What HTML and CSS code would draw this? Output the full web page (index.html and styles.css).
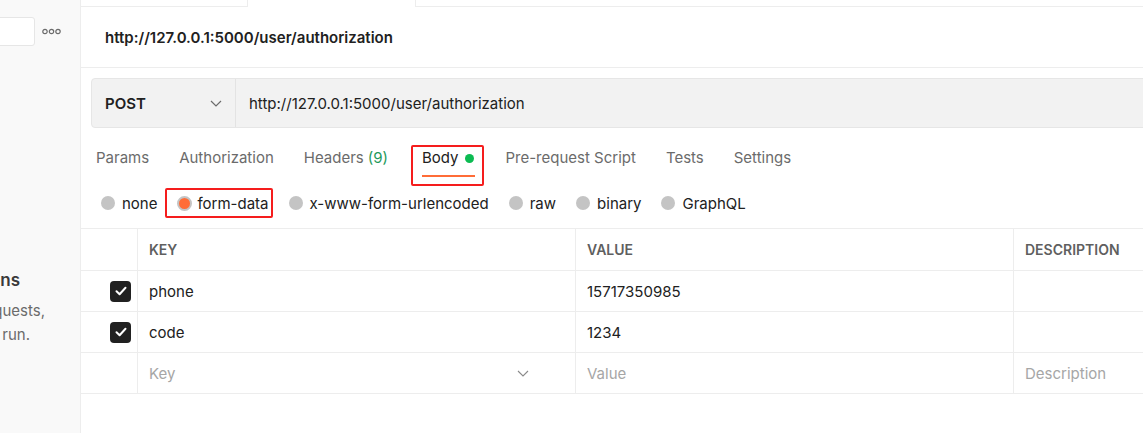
FILE: index.html
```html
<!DOCTYPE html>
<html>
<head>
<meta charset="utf-8">
<link rel="stylesheet" href="styles.css">
</head>
<body>
<div class="app">
  <aside class="sidebar">
    <div class="side-search">
      <div class="search-box"></div>
      <svg class="more" width="19" height="7" viewBox="0 0 19 7"><circle cx="3" cy="3.5" r="2.2" fill="none" stroke="#6b6b6b" stroke-width="1.2"/><circle cx="9.5" cy="3.5" r="2.2" fill="none" stroke="#6b6b6b" stroke-width="1.2"/><circle cx="16" cy="3.5" r="2.2" fill="none" stroke="#6b6b6b" stroke-width="1.2"/></svg>
    </div>
    <div class="empty">
      <div class="line l1"><span>You don't have any collections</span></div>
      <div class="line l2"><span>Collections let you group related requests,</span></div>
      <div class="line l3"><span>making them easier to access and run.</span></div>
    </div>
  </aside>
  <main class="main">
    <div class="tabstrip">
      <div class="ts-tab"></div>
      <div class="ts-active"></div>
      <div class="ts-rest"></div>
    </div>
    <div class="title">http://127.0.0.1:5000/user/authorization</div>
    <div class="reqbar">
      <div class="method">
        <span>POST</span>
        <svg class="chev" width="12" height="7" viewBox="0 0 12 7"><path d="M1 1 L6 6 L11 1" fill="none" stroke="#6b6b6b" stroke-width="1.2"/></svg>
      </div>
      <div class="url">http://127.0.0.1:5000/user/authorization</div>
    </div>
    <nav class="tabs">
      <div class="tab">Params</div>
      <div class="tab">Authorization</div>
      <div class="tab">Headers <span class="count">(9)</span></div>
      <div class="tab active">Body <span class="dot"></span><span class="mark mark-body"></span></div>
      <div class="tab">Pre-request Script</div>
      <div class="tab">Tests</div>
      <div class="tab">Settings</div>
    </nav>
    <div class="radios">
      <div class="radio"><span class="circle"></span>none</div>
      <div class="radio sel"><span class="circle"></span>form-data<span class="mark mark-form"></span></div>
      <div class="radio"><span class="circle"></span>x-www-form-urlencoded</div>
      <div class="radio"><span class="circle"></span>raw</div>
      <div class="radio"><span class="circle"></span>binary</div>
      <div class="radio"><span class="circle"></span>GraphQL</div>
    </div>
    <div class="table">
      <div class="row head">
        <div class="cell chk"></div>
        <div class="cell">KEY</div>
        <div class="cell">VALUE</div>
        <div class="cell">DESCRIPTION</div>
      </div>
      <div class="row">
        <div class="cell chk"><span class="box"><svg width="12" height="10" viewBox="0 0 12 10"><path d="M1.5 5.2 L4.6 8.2 L10.5 1.8" fill="none" stroke="#fff" stroke-width="2" stroke-linecap="round" stroke-linejoin="round"/></svg></span></div>
        <div class="cell">phone</div>
        <div class="cell">15717350985</div>
        <div class="cell"></div>
      </div>
      <div class="row">
        <div class="cell chk"><span class="box"><svg width="12" height="10" viewBox="0 0 12 10"><path d="M1.5 5.2 L4.6 8.2 L10.5 1.8" fill="none" stroke="#fff" stroke-width="2" stroke-linecap="round" stroke-linejoin="round"/></svg></span></div>
        <div class="cell">code</div>
        <div class="cell">1234</div>
        <div class="cell"></div>
      </div>
      <div class="row">
        <div class="cell chk"></div>
        <div class="cell ph">Key<svg class="kchev" width="12" height="7" viewBox="0 0 12 7"><path d="M1 1 L6 6 L11 1" fill="none" stroke="#8a8a8a" stroke-width="1.1"/></svg></div>
        <div class="cell ph">Value</div>
        <div class="cell ph">Description</div>
      </div>
    </div>
  </main>
</div>
</body>
</html>
```

FILE: styles.css
```css
* { box-sizing: border-box; }
html, body { margin: 0; padding: 0; }
body {
  font-family: Inter, "Noto Sans", sans-serif;
  color: #212121;
  background: #fff;
  width: 1143px;
  height: 433px;
  overflow: hidden;
}
.app { display: flex; height: 433px; }

.sidebar {
  width: 81px;
  flex: none;
  background: #f9f9f9;
  border-right: 1px solid #ededed;
  overflow: hidden;
  padding-top: 17px;
}
.side-search { display: flex; align-items: center; height: 29px; }
.search-box {
  width: 40px;
  height: 29px;
  margin-left: -5px;
  background: #fff;
  border: 1px solid #e6e6e6;
  border-radius: 3px;
  flex: none;
}
.more { margin-left: 7px; flex: none; }
.empty { margin-top: 222px; }
.line { display: flex; justify-content: flex-end; white-space: nowrap; }
.line span { flex: none; }
.l1 { height: 24px; line-height: 24px; font-size: 17px; font-weight: 600; color: #3a3a3a; padding-right: 60px; }
.l2, .l3 { height: 24px; line-height: 24px; font-size: 15px; color: #6b6b6b; }
.l2 { margin-top: 7px; padding-right: 35px; }
.l3 { padding-right: 50px; }

.main { flex: 1; min-width: 0; display: flex; flex-direction: column; overflow: hidden; position: relative; }

.tabstrip { display: flex; height: 7px; flex: none; }
.ts-tab { width: 167px; border-right: 1px solid #ededed; border-bottom: 1px solid #ededed; }
.ts-active { width: 167px; }
.ts-rest { flex: 1; border-left: 1px solid #ededed; border-bottom: 1px solid #ededed; }

.title {
  height: 61px;
  flex: none;
  border-bottom: 1px solid #ededed;
  padding-left: 24px;
  display: flex;
  align-items: center;
  font-size: 15px;
  font-weight: 600;
  color: #212121;
}

.reqbar {
  margin: 10px -20px 0 10px;
  height: 50px;
  flex: none;
  display: flex;
  background: #f2f2f2;
  border: 1px solid #e6e6e6;
  border-radius: 4px;
}
.method {
  width: 144px;
  flex: none;
  display: flex;
  align-items: center;
  padding-left: 13px;
  border-right: 1px solid #e3e3e3;
  font-size: 15px;
  font-weight: 600;
}
.chev { margin-left: auto; margin-right: 13px; }
.url { display: flex; align-items: center; padding-left: 13px; font-size: 15px; color: #212121; }

.tabs { display: flex; gap: 30px; padding: 10px 0 0 15px; flex: none; height: 49px; }
.tab {
  position: relative;
  height: 39px;
  padding-top: 10px;
  line-height: 20px;
  font-size: 15px;
  color: #6b6b6b;
  border-bottom: 2px solid transparent;
  display: flex;
  align-items: flex-start;
  white-space: nowrap;
}
.tab .count { color: #1f9a5c; margin-left: 4px; }
.tab.active { color: #212121; border-bottom-color: #ff6c37; margin-left: 4px; }
.dot { width: 9px; height: 9px; border-radius: 50%; background: #0cbb52; margin: 6px 1px 0 7px; }

.mark { position: absolute; border: 2px solid #f51d1d; border-radius: 2px; pointer-events: none; }
.mark-body { left: -11px; right: -9px; top: 7px; bottom: -11px; }
.mark-form { left: -12px; right: -4px; top: 0; bottom: 0; }

.radios { display: flex; gap: 20px; padding-left: 20px; margin-top: 11px; height: 30px; flex: none; }
.radio {
  position: relative;
  display: flex;
  align-items: center;
  font-size: 15px;
  color: #212121;
  white-space: nowrap;
}
.circle { width: 14px; height: 14px; border-radius: 50%; background: #c4c4c4; margin-right: 7px; flex: none; }
.radio.sel .circle { background: #ff6c37; border: 2px solid #c4c4c4; width: 15px; height: 15px; margin-right: 5px; }

.table { margin-top: 10px; border-top: 1px solid #ededed; flex: none; }
.row {
  display: grid;
  grid-template-columns: 56px 438px 438px 1fr;
  height: 41px;
  border-bottom: 1px solid #ededed;
}
.row.head { height: 42px; }
.cell {
  display: flex;
  align-items: center;
  padding-left: 11px;
  font-size: 15px;
  color: #212121;
  border-left: 1px solid #ededed;
  white-space: nowrap;
}
.cell.chk { border-left: none; padding-left: 0; justify-content: flex-end; padding-right: 6px; }
.head .cell { font-size: 14px; font-weight: 600; color: #5f5f5f; }
.cell.ph { color: #a6a6a6; }
.kchev { margin-left: auto; margin-right: 46px; }
.box {
  width: 21px;
  height: 21px;
  border-radius: 4px;
  background: #212121;
  display: flex;
  align-items: center;
  justify-content: center;
}
```
